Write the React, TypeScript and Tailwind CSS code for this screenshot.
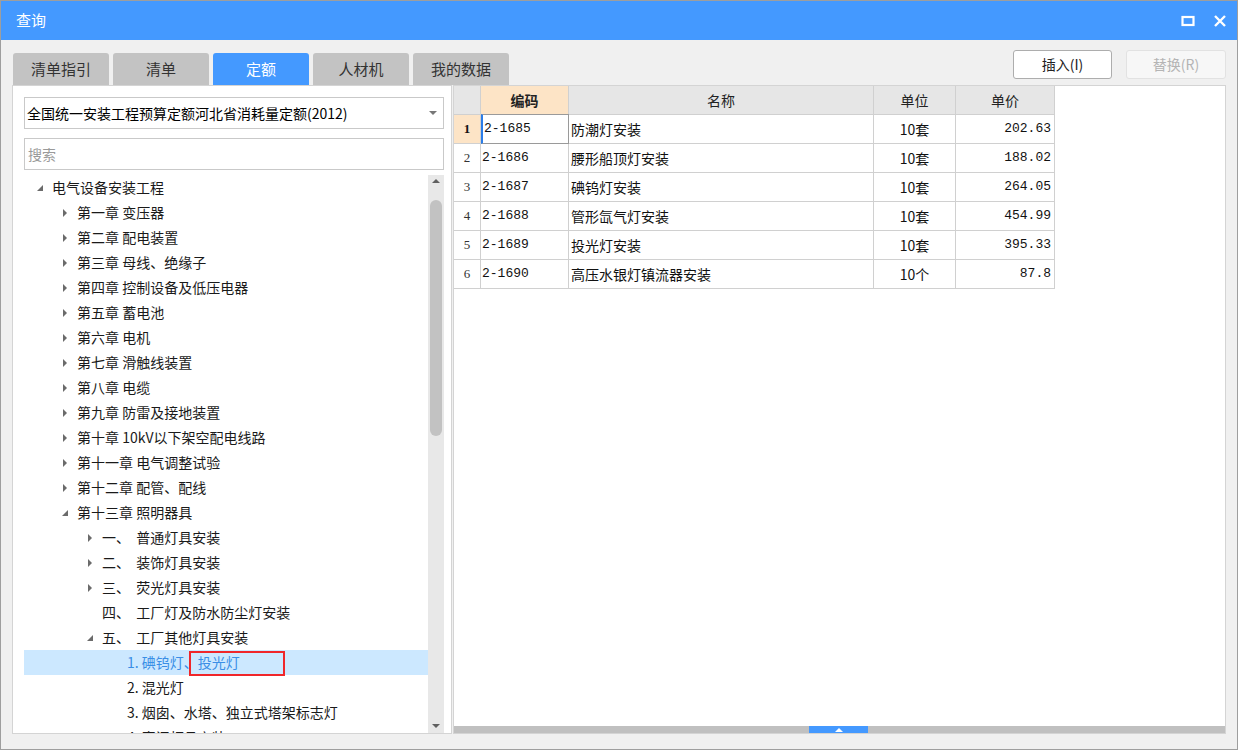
import React from 'react';

const ui = { fontFamily: '"Noto Sans CJK SC", "Noto Sans", sans-serif' };
const mono = { fontFamily: '"Liberation Mono", "Noto Sans CJK SC", monospace' };

type Node = { level: number; text: string; state: 'open' | 'closed' | 'leaf'; selected?: boolean };

const tree: Node[] = [
  { level: 0, text: '电气设备安装工程', state: 'open' },
  { level: 1, text: '第一章 变压器', state: 'closed' },
  { level: 1, text: '第二章 配电装置', state: 'closed' },
  { level: 1, text: '第三章 母线、绝缘子', state: 'closed' },
  { level: 1, text: '第四章 控制设备及低压电器', state: 'closed' },
  { level: 1, text: '第五章 蓄电池', state: 'closed' },
  { level: 1, text: '第六章 电机', state: 'closed' },
  { level: 1, text: '第七章 滑触线装置', state: 'closed' },
  { level: 1, text: '第八章 电缆', state: 'closed' },
  { level: 1, text: '第九章 防雷及接地装置', state: 'closed' },
  { level: 1, text: '第十章 10kV以下架空配电线路', state: 'closed' },
  { level: 1, text: '第十一章 电气调整试验', state: 'closed' },
  { level: 1, text: '第十二章 配管、配线', state: 'closed' },
  { level: 1, text: '第十三章 照明器具', state: 'open' },
  { level: 2, text: '一、  普通灯具安装', state: 'closed' },
  { level: 2, text: '二、  装饰灯具安装', state: 'closed' },
  { level: 2, text: '三、  荧光灯具安装', state: 'closed' },
  { level: 2, text: '四、  工厂灯及防水防尘灯安装', state: 'leaf' },
  { level: 2, text: '五、  工厂其他灯具安装', state: 'open' },
  { level: 3, text: '1. 碘钨灯、投光灯', state: 'leaf', selected: true },
  { level: 3, text: '2. 混光灯', state: 'leaf' },
  { level: 3, text: '3. 烟囱、水塔、独立式塔架标志灯', state: 'leaf' },
  { level: 3, text: '4. 密闭灯具安装', state: 'leaf' },
];

const rows = [
  { code: '2-1685', name: '防潮灯安装', unit: '10套', price: '202.63' },
  { code: '2-1686', name: '腰形船顶灯安装', unit: '10套', price: '188.02' },
  { code: '2-1687', name: '碘钨灯安装', unit: '10套', price: '264.05' },
  { code: '2-1688', name: '管形氙气灯安装', unit: '10套', price: '454.99' },
  { code: '2-1689', name: '投光灯安装', unit: '10套', price: '395.33' },
  { code: '2-1690', name: '高压水银灯镇流器安装', unit: '10个', price: '87.8' },
];

const tabs = ['清单指引', '清单', '定额', '人材机', '我的数据'];

function Arrow({ state }: { state: Node['state'] }) {
  if (state === 'closed')
    return (
      <svg width="8" height="10" viewBox="0 0 8 10">
        <path d="M2 1 L6 5 L2 9 Z" fill="#6b6b6b" />
      </svg>
    );
  if (state === 'open')
    return (
      <svg width="8" height="10" viewBox="0 0 8 10">
        <path d="M7 2 L7 8 L1 8 Z" fill="#6b6b6b" />
      </svg>
    );
  return <span className="inline-block w-[8px]" />;
}

function TreeRow({ n }: { n: Node }) {
  const pad = [10, 35, 60, 85][n.level];
  return (
    <div
      className={`h-[25px] shrink-0 flex items-center text-[14px] ${n.selected ? 'bg-[#cce8ff] text-[#3a8ee6]' : 'text-[#1a1a1a]'}`}
      style={{ paddingLeft: pad }}
    >
      <span className="w-[18px] flex items-center justify-start pl-[2px]">
        <Arrow state={n.state} />
      </span>
      {n.selected ? (
        <>
          <span className="whitespace-pre">1. 碘钨灯</span>
          <span className="relative whitespace-pre">
            、投光灯
            <span className="absolute left-[5px] -top-[1px] w-[96px] h-[25px] border-2 border-[#f0262a]" />
          </span>
        </>
      ) : (
        <span className="whitespace-pre">{n.text}</span>
      )}
    </div>
  );
}

export default function App() {
  return (
    <div
      className="w-[1238px] h-[750px] border border-[#9e9e9e] bg-[#f0f0f0] flex flex-col overflow-hidden"
      style={ui}
    >
      {/* title bar */}
      <div className="h-[39px] shrink-0 bg-[#4499ff] flex items-center justify-between pl-[15px] pr-[10px] text-white">
        <span className="text-[15px]">查询</span>
        <div className="flex items-center gap-[18px]">
          <svg width="14" height="14" viewBox="0 0 14 14">
            <rect x="1.5" y="3" width="11" height="8" fill="none" stroke="#fff" strokeWidth="2.2" />
          </svg>
          <svg width="14" height="14" viewBox="0 0 14 14">
            <path d="M2 2 L12 12 M12 2 L2 12" stroke="#fff" strokeWidth="2.4" />
          </svg>
        </div>
      </div>

      {/* body */}
      <div className="flex-1 min-h-0 flex flex-col px-[11px] pb-[15px]">
        <div className="flex shrink-0 justify-between items-start pt-[10px]">
          <div className="flex gap-[4px] mt-[3px] pl-[1px]">
            {tabs.map((t) => (
              <div
                key={t}
                className={`w-[96px] h-[32px] rounded-t-[3px] flex items-center justify-center text-[15px] ${t === '定额' ? 'bg-[#4499ff] text-white' : 'bg-[#c3c3c3] text-[#333]'}`}
              >
                {t}
              </div>
            ))}
          </div>
          <div className="flex gap-[14px]">
            <button className="w-[99px] h-[29px] bg-white border border-[#adadad] rounded-[3px] text-[14px] text-[#222]">
              插入(I)
            </button>
            <button className="w-[100px] h-[29px] bg-[#f7f7f7] border border-[#e2e2e2] rounded-[3px] text-[14px] text-[#b4b4b4]">
              替换(R)
            </button>
          </div>
        </div>

        <div className="flex-1 flex gap-[1px] min-h-0">
          {/* left pane */}
          <div className="w-[440px] bg-white border border-[#d4d4d4] flex flex-col pl-[11px] pr-[7px] pt-[11px] min-h-0">
            <div className="h-[32px] shrink-0 border border-[#c9c9c9] flex items-center justify-between pl-[2px] pr-[6px] text-[14px] text-black">
              <span>全国统一安装工程预算定额河北省消耗量定额(2012)</span>
              <svg width="8" height="5" viewBox="0 0 8 5">
                <path d="M0 0 L8 0 L4 4 Z" fill="#777" />
              </svg>
            </div>
            <div className="h-[32px] shrink-0 mt-[9px] border border-[#c9c9c9] flex items-center pl-[3px] text-[14px] text-[#9a9a9a]">
              搜索
            </div>
            <div className="flex-1 flex mt-[5px] min-h-0">
              <div className="flex-1 overflow-hidden flex flex-col">
                {tree.map((n, i) => (
                  <TreeRow key={i} n={n} />
                ))}
              </div>
              <div className="w-[16px] bg-[#e8e8e8] flex flex-col items-center">
                <svg width="10" height="8" viewBox="0 0 10 8" className="mt-[2px]">
                  <path d="M1 6 L5 2 L9 6 Z" fill="#606060" />
                </svg>
                <div className="w-[12px] h-[236px] mt-[15px] rounded-full bg-[#c2c2c2]" />
                <div className="flex-1" />
                <svg width="10" height="8" viewBox="0 0 10 8" className="mb-[3px]">
                  <path d="M1 2 L5 6 L9 2 Z" fill="#606060" />
                </svg>
              </div>
            </div>
          </div>

          {/* right pane */}
          <div className="flex-1 bg-white border border-[#d4d4d4] flex flex-col min-h-0">
            <div className="flex-1">
              <div className="flex h-[29px] text-[14px] text-[#222]">
                <div className="w-[27px] bg-[#e6e6e6] border-r border-b border-[#d0d0d0]" />
                <div className="w-[88px] bg-[#fde4c6] border-r border-b border-[#d0d0d0] flex items-center justify-center font-bold">编码</div>
                <div className="w-[305px] bg-[#e6e6e6] border-r border-b border-[#d0d0d0] flex items-center justify-center">名称</div>
                <div className="w-[82px] bg-[#e6e6e6] border-r border-b border-[#d0d0d0] flex items-center justify-center">单位</div>
                <div className="w-[99px] bg-[#e6e6e6] border-r border-b border-[#d0d0d0] flex items-center justify-center">单价</div>
              </div>
              {rows.map((r, i) => (
                <div key={r.code} className="flex h-[29px] text-[14px] text-[#111]">
                  <div
                    className={`w-[27px] border-r border-b border-[#d0d0d0] flex items-center justify-center text-[13px] ${i === 0 ? 'bg-[#fde4c6] font-bold' : 'bg-white text-[#333]'}`}
                    style={{ fontFamily: '"Liberation Serif", serif' }}
                  >
                    {i + 1}
                  </div>
                  <div
                    className={`w-[88px] border-b border-r flex items-center pl-[1px] text-[13px] ${i === 0 ? 'border-[#9a9a9a] border-l-2 border-l-[#2b7de9] border-t -mt-[1px] h-[30px]' : 'border-[#d0d0d0]'}`}
                    style={mono}
                  >
                    {r.code}
                  </div>
                  <div className="w-[305px] border-r border-b border-[#d0d0d0] flex items-center pl-[2px]">{r.name}</div>
                  <div className="w-[82px] border-r border-b border-[#d0d0d0] flex items-center justify-center">{r.unit}</div>
                  <div className="w-[99px] border-r border-b border-[#d0d0d0] flex items-center justify-end pr-[3px] text-[13px]" style={mono}>
                    {r.price}
                  </div>
                </div>
              ))}
            </div>
            <div className="h-[7px] shrink-0 bg-[#c0c0c0] flex">
              <div className="ml-[355px] w-[59px] h-[7px] bg-[#4499ff] flex items-center justify-center">
                <svg width="8" height="5" viewBox="0 0 8 5">
                  <path d="M0 5 L4 1 L8 5 Z" fill="#fff" />
                </svg>
              </div>
            </div>
          </div>
        </div>
      </div>
    </div>
  );
}
